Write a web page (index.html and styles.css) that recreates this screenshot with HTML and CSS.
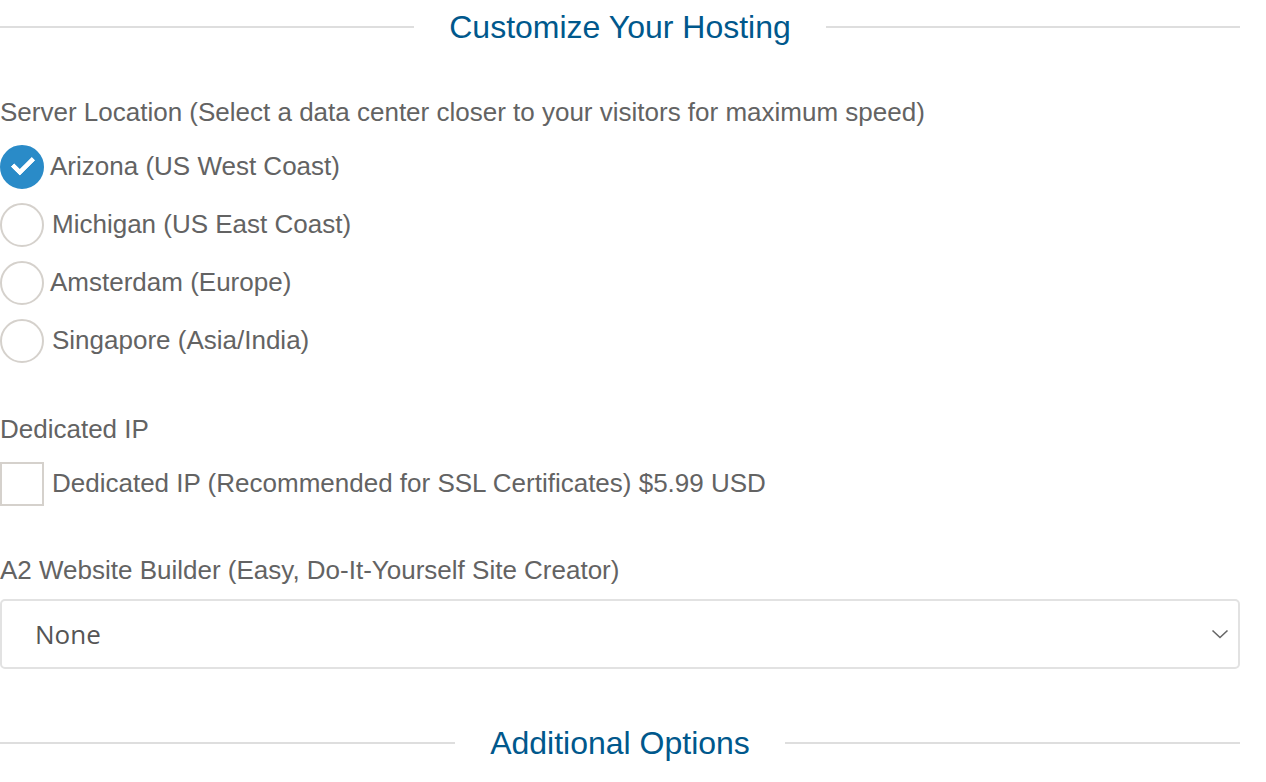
FILE: index.html
```html
<!DOCTYPE html>
<html lang="en">

<head>
    <meta charset="UTF-8">
    <meta name="viewport" content="width=device-width, initial-scale=1.0">
    <title>Configure Hosting</title>
    <link rel="stylesheet" href="styles.css">
</head>

<body>
    <div class="config">
        <!-- Section title -->
        <h2 class="section-title">Customize Your Hosting</h2>

        <!-- Server location -->
        <div class="field field-first">
            <div class="field-label">Server Location (Select a data center closer to your visitors for maximum speed)</div>
            <label class="option">
                <input type="radio" name="location" checked>
                <span class="radio"></span>
                <span class="option-text">Arizona (US West Coast)</span>
            </label>
            <label class="option">
                <input type="radio" name="location">
                <span class="radio"></span>
                <span class="option-text shift">Michigan (US East Coast)</span>
            </label>
            <label class="option">
                <input type="radio" name="location">
                <span class="radio"></span>
                <span class="option-text">Amsterdam (Europe)</span>
            </label>
            <label class="option">
                <input type="radio" name="location">
                <span class="radio"></span>
                <span class="option-text shift">Singapore (Asia/India)</span>
            </label>
        </div>

        <!-- Dedicated IP -->
        <div class="field">
            <div class="field-label">Dedicated IP</div>
            <label class="option">
                <input type="checkbox">
                <span class="checkbox"></span>
                <span class="option-text shift">Dedicated IP (Recommended for SSL Certificates) $5.99 USD</span>
            </label>
        </div>

        <!-- Website builder -->
        <div class="field field-builder">
            <div class="field-label">A2 Website Builder (Easy, Do-It-Yourself Site Creator)</div>
            <div class="select-wrap">
                <select class="select">
                    <option>None</option>
                </select>
                <svg class="chevron" width="18" height="12" viewBox="0 0 18 12">
                    <path d="M1.5 2.5 L9 9.5 L16.5 2.5" fill="none" stroke="#666" stroke-width="1.6" />
                </svg>
            </div>
        </div>

        <h2 class="section-title title-next">Additional Options</h2>
    </div>
</body>

</html>
```

FILE: styles.css
```css
/* Page */
body {
    margin: 0;
    padding: 0;
    background-color: #fff;
    font-family: "Liberation Sans", Arial, sans-serif;
    color: #636363;
}
.config {
    width: 1240px;
}
/* Title with lines either side */
.section-title {
    display: flex;
    align-items: center;
    gap: 35px;
    margin: 0;
    height: 54px;
    font-size: 32px;
    font-weight: normal;
    color: #00588c;
    white-space: nowrap;
}
.section-title::before,
.section-title::after {
    content: "";
    flex: 1;
    height: 2px;
    background-color: #dedede;
}
.title-next {
    margin-top: 47px;
}
/* Fields */
.field {
    margin-top: 44px;
}
.field-first {
    margin-top: 43px;
}
.field-builder {
    margin-top: 42px;
}
.field-label {
    font-size: 26px;
    line-height: 30px;
    margin-bottom: 11px;
}
.option {
    display: flex;
    align-items: center;
    gap: 6px;
    height: 58px;
    font-size: 26px;
    cursor: pointer;
}
.option input {
    display: none;
}
.option-text {
    margin-top: -2px;
}
.option-text.shift {
    margin-left: 2px;
}
/* Custom radio */
.radio {
    box-sizing: border-box;
    width: 44px;
    height: 44px;
    border: 2px solid #d5d1cc;
    border-radius: 50%;
    flex-shrink: 0;
    position: relative;
}
.option input:checked + .radio {
    background-color: #2a8bc8;
    border-color: #2a8bc8;
}
.option input:checked + .radio::after {
    content: "";
    position: absolute;
    left: 10px;
    top: 10px;
    width: 17px;
    height: 8px;
    border-left: 5px solid #fff;
    border-bottom: 5px solid #fff;
    border-radius: 1px;
    transform: rotate(-45deg);
}
/* Custom checkbox */
.checkbox {
    box-sizing: border-box;
    width: 44px;
    height: 44px;
    border: 2px solid #d5d1cc;
    flex-shrink: 0;
}
/* Select */
.select-wrap {
    position: relative;
    margin-top: 14px;
}
.select {
    appearance: none;
    -webkit-appearance: none;
    box-sizing: border-box;
    display: block;
    width: 100%;
    height: 70px;
    padding: 0 0 0 33px;
    border: 2px solid #e2e2e2;
    border-radius: 5px;
    background-color: #fff;
    font-family: "Open Sans", sans-serif;
    font-size: 26px;
    color: #555;
    outline: none;
}
.chevron {
    position: absolute;
    right: 11px;
    top: 29px;
    pointer-events: none;
}
```
